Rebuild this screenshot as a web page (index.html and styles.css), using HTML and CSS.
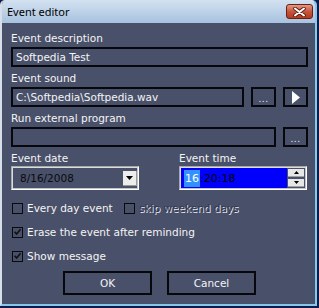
FILE: index.html
```html
<!DOCTYPE html>
<html>
<head>
	<title>Event editor</title>
<link rel="stylesheet" href="styles.css">
</head>
<body>

<div class="window">
	<div class="titlebar">
		<span class="title">Event editor</span>
		<span class="close">
			<svg width="13" height="10" viewBox="0 0 13 10">
				<path d="M2 1.5 L11 8.5 M11 1.5 L2 8.5" stroke="#5a1a10" stroke-width="3.6" stroke-linecap="round"/>
				<path d="M2 1.5 L11 8.5 M11 1.5 L2 8.5" stroke="#ffffff" stroke-width="2" stroke-linecap="round"/>
			</svg>
		</span>
	</div>

	<form class="content" autocomplete="off">
		<label class="lbl first">Event description</label>
		<input type="text" class="box" value="Softpedia Test">

		<label class="lbl">Event sound</label>
		<div class="row">
			<input type="text" class="box grow" value="C:\Softpedia\Softpedia.wav">
			<span class="sq dots">...</span>
			<span class="sq">
				<svg width="8" height="13" viewBox="0 0 8 13"><polygon points="0,0 8,6.5 0,13" fill="#ffffff"/></svg>
			</span>
		</div>

		<label class="lbl">Run external program</label>
		<div class="row">
			<input type="text" class="box grow" value="">
			<span class="sq dots">...</span>
		</div>

		<div class="dt">
			<div>
				<label class="lbl tight">Event date</label>
				<div class="sunken combo">
					<span class="date">8/16/2008</span>
					<span class="drop">
						<svg width="7" height="4" viewBox="0 0 7 4"><polygon points="0,0 7,0 3.5,4" fill="#000"/></svg>
					</span>
				</div>
			</div>
			<div>
				<label class="lbl tight">Event time</label>
				<div class="sunken timebox">
					<span class="timefield"><span class="sel">16</span>:20:18</span>
					<span class="spin">
						<span class="spinbtn"><svg width="5" height="3" viewBox="0 0 5 3"><polygon points="0,3 5,3 2.5,0" fill="#000"/></svg></span>
						<span class="spinbtn"><svg width="5" height="3" viewBox="0 0 5 3"><polygon points="0,0 5,0 2.5,3" fill="#000"/></svg></span>
					</span>
				</div>
			</div>
		</div>

		<div class="checks">
			<div class="chkrow">
				<span class="item first-item"><span class="chk"></span>Every day event</span>
				<span class="item disabled"><span class="chk"></span>skip weekend days</span>
			</div>
			<div class="chkrow">
				<span class="item"><span class="chk on"><svg width="10" height="10" viewBox="0 0 10 10"><path d="M1.8 4.8 L4 7.3 L8.4 2" stroke="#111" stroke-width="1.8" fill="none"/></svg></span>Erase the event after reminding</span>
			</div>
			<div class="chkrow">
				<span class="item"><span class="chk on"><svg width="10" height="10" viewBox="0 0 10 10"><path d="M1.8 4.8 L4 7.3 L8.4 2" stroke="#111" stroke-width="1.8" fill="none"/></svg></span>Show message</span>
			</div>
		</div>

		<div class="buttons">
			<span class="btn">OK</span>
			<span class="btn">Cancel</span>
		</div>
	</form>
</div>

</body>
</html>
```

FILE: styles.css
```css
*{box-sizing: border-box;}

body{margin: 0;background: #0d1c48;font-family: "DejaVu Sans", sans-serif;font-size: 10.5px;color: #f4f4f4;}

.window{width: 317px;height: 306px;background: #495069;border-left: 2px solid #d6dee9;border-right: 2px solid #86c8ec;border-bottom: 2px solid #86c8ec;border-radius: 5px 5px 0 0;overflow: hidden;}

.titlebar{height: 23px;background: linear-gradient(#d3e1f0, #a8c2df);display: flex;align-items: center;justify-content: space-between;padding-left: 5px;}
.title{font-family: "Noto Sans", sans-serif;font-size: 11px;color: #000;}
.close{width: 27px;height: 15px;margin-right: 2px;border: 1px solid #6a2012;border-radius: 3px;background: linear-gradient(#e49a86, #c8563c 50%, #b23a20);display: flex;align-items: center;justify-content: center;}
.close svg{display: block;}

.content{display: block;margin: 0;padding: 8px 7px 0 9px;}

.lbl{display: block;line-height: 14px;margin: 4px 0 2px;}
.lbl.first{margin-top: 0;}
.lbl.tight{margin-bottom: 1px;}

.box{display: block;width: 100%;height: 20px;margin: 0;padding: 0 3px;border: 2px solid #07080c;background: transparent;color: #f4f4f4;font-family: "DejaVu Sans", sans-serif;font-size: 10.5px;outline: none;}

.row{display: flex;gap: 7px;}
.grow{flex: 1;width: auto;min-width: 0;}
.sq{width: 25px;height: 20px;flex: none;border: 2px solid #07080c;display: flex;align-items: center;justify-content: center;}
.dots{align-items: flex-end;font-size: 9px;line-height: 12px;letter-spacing: 0.5px;}

.dt{display: grid;grid-template-columns: 128px 128px;column-gap: 40px;}

.sunken{height: 24px;border: 1px solid;border-color: #a8a8a8 #ffffff #ffffff #a8a8a8;box-shadow: inset 1px 1px 0 #dcdcdc, inset -1px -1px 0 #c4c4c4;display: flex;align-items: center;}

.combo{padding: 0 1px 0 8px;justify-content: space-between;}
.date{color: #0a0a10;}
.drop{width: 14px;height: 15px;background: #ededed;border-bottom: 1px solid #9a9a9a;border-right: 1px solid #9a9a9a;display: flex;align-items: center;justify-content: center;}

.timebox{padding: 1px 2px 1px 1px;}
.timefield{flex: 1;height: 100%;background: #0000fb;color: #000;display: flex;align-items: center;padding-left: 3px;font-size: 11px;}
.sel{background: #3391ff;color: #fff;padding: 0 1px;line-height: 17px;}
.spin{width: 16px;height: 100%;display: flex;flex-direction: column;justify-content: center;gap: 2px;margin-left: 1px;}
.spinbtn{height: 8px;background: #e6e6e6;border-bottom: 1px solid #a0a0a0;display: flex;align-items: center;justify-content: center;}

.checks{margin-top: 11px;display: flex;flex-direction: column;gap: 10px;}
.chkrow{display: flex;line-height: 14px;padding-left: 1px;}
.item{display: flex;align-items: center;gap: 4px;}
.first-item{width: 112px;}
.chk{width: 11px;height: 11px;border: 1px solid #0a0a0e;display: flex;align-items: center;justify-content: center;}
.chk svg{display: block;}
.disabled{color: #323850;text-shadow: 1px 1px 0 #e6e8f0;}

.buttons{margin-top: 8px;display: flex;justify-content: center;gap: 15px;}
.btn{width: 89px;height: 24px;border: 2px solid #07080c;display: flex;align-items: center;justify-content: center;}
```
